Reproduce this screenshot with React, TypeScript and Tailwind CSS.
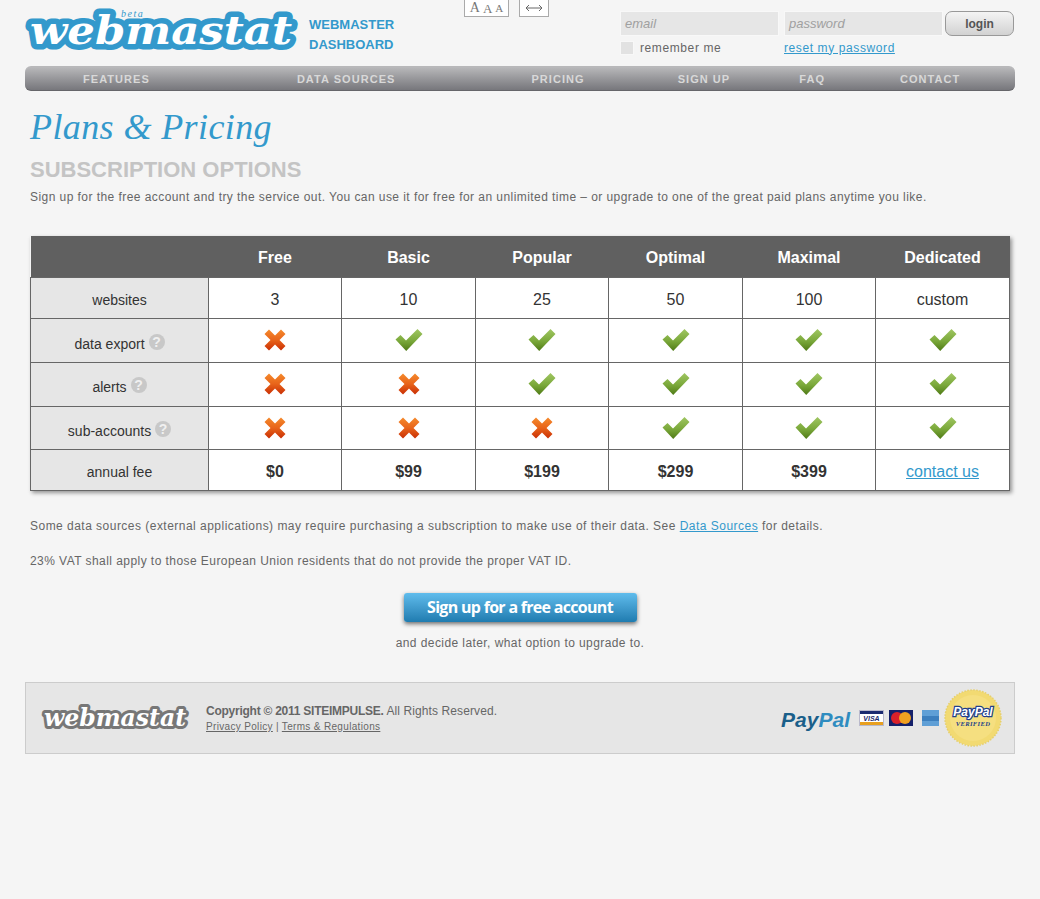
const sans = "font-['Liberation_Sans',Arial,sans-serif]";

function Cross() {
  return (
    <svg width="24" height="24" viewBox="0 0 24 24" className="mx-auto block">
      <defs>
        <linearGradient id="crossFill" x1="0" y1="0" x2="0" y2="1">
          <stop offset="0" stopColor="#f58a2c" />
          <stop offset="0.5" stopColor="#e8641a" />
          <stop offset="1" stopColor="#c92f05" />
        </linearGradient>
      </defs>
      <path
        d="M6 1.5 L12 7.5 L18 1.5 L22.5 6 L16.5 12 L22.5 18 L18 22.5 L12 16.5 L6 22.5 L1.5 18 L7.5 12 L1.5 6 Z"
        fill="url(#crossFill)"
      />
    </svg>
  );
}

function Check() {
  return (
    <svg width="28" height="24" viewBox="0 0 28 24" className="mx-auto block">
      <defs>
        <linearGradient id="checkFill" x1="0" y1="0" x2="0" y2="1">
          <stop offset="0" stopColor="#a0c662" />
          <stop offset="0.55" stopColor="#7aa83a" />
          <stop offset="1" stopColor="#4f7a16" />
        </linearGradient>
      </defs>
      <path d="M0.5 11.5 L5.5 7 L11 12.5 L22.5 1 L27.5 6 L11.2 23 Z" fill="url(#checkFill)" />
    </svg>
  );
}

function Help() {
  return (
    <span className="ml-[4px] inline-flex h-4 w-4 -translate-y-[3px] items-center justify-center rounded-full bg-[#c8c8c8] align-middle text-[14px] leading-none font-bold text-[#f0f0f0]">
      ?
    </span>
  );
}

function Logo() {
  return (
    <svg width="272" height="46" viewBox="0 0 272 46" className="block overflow-visible">
      <text
        x="5"
        y="34"
        fontFamily="'DejaVu Serif', serif"
        fontStyle="italic"
        fontWeight="700"
        fontSize="40"
        textLength="262"
        lengthAdjust="spacingAndGlyphs"
        fill="#ffffff"
        stroke="#3399cc"
        strokeWidth="11"
        strokeLinejoin="round"
        paintOrder="stroke"
      >
        webmastat
      </text>
      <text x="96" y="7" fontFamily="'Liberation Serif', serif" fontStyle="italic" fontSize="10" letterSpacing="1.5" fill="#3399cc">
        beta
      </text>
    </svg>
  );
}

function FooterLogo() {
  return (
    <svg width="150" height="26" viewBox="0 0 150 26" className="block overflow-visible">
      <text
        x="4"
        y="19"
        fontFamily="'DejaVu Serif', serif"
        fontStyle="italic"
        fontWeight="700"
        fontSize="24"
        textLength="142"
        lengthAdjust="spacingAndGlyphs"
        fill="#ffffff"
        stroke="#777777"
        strokeWidth="6"
        strokeLinejoin="round"
        paintOrder="stroke"
      >
        webmastat
      </text>
    </svg>
  );
}

function Cards() {
  return (
    <svg width="80" height="17" viewBox="0 0 80 17" className="block">
      <rect x="0.5" y="0.5" width="24" height="15" fill="#ffffff" stroke="#b9b9cc" />
      <rect x="1" y="1" width="23" height="3" fill="#1a2a70" />
      <rect x="1" y="12" width="23" height="3" fill="#e8a020" />
      <text x="12.5" y="10.5" textAnchor="middle" fontSize="7" fontWeight="700" fontStyle="italic" fontFamily="'Liberation Sans', sans-serif" fill="#1a2a70">
        VISA
      </text>
      <rect x="30" y="0" width="24" height="16" fill="#14206a" />
      <circle cx="38" cy="8" r="6" fill="#d8202a" />
      <circle cx="46" cy="8" r="6" fill="#f0a020" />
      <rect x="63" y="0" width="17" height="16" fill="#5f9fd6" />
      <rect x="63" y="6" width="17" height="5" fill="#3c7fbe" />
    </svg>
  );
}

function Seal() {
  return (
    <svg width="58" height="58" viewBox="0 0 58 58" className="block">
      <circle cx="29" cy="29" r="28" fill="#f2da72" stroke="#e6cf6a" strokeWidth="1.5" strokeDasharray="1.5 1.5" />
      <circle cx="29" cy="29" r="23" fill="#f5df80" />
      <text x="29" y="27" textAnchor="middle" fontFamily="'Liberation Sans', sans-serif" fontStyle="italic" fontWeight="700" fontSize="12" fill="#ffffff" stroke="#22408a" strokeWidth="2.5" paintOrder="stroke">
        PayPal
      </text>
      <text x="29" y="37" textAnchor="middle" fontFamily="'Liberation Serif', serif" fontStyle="italic" fontWeight="700" fontSize="6.5" letterSpacing="0.4" fill="#22408a">
        VERIFIED
      </text>
    </svg>
  );
}

const plans = ["Free", "Basic", "Popular", "Optimal", "Maximal", "Dedicated"];
const cellBorder = "border border-[#666666]";

const rows = [
  { label: "data export", flags: [0, 1, 1, 1, 1, 1], h: "h-[44px]", pad: "pt-[8px]" },
  { label: "alerts", flags: [0, 0, 1, 1, 1, 1], h: "h-[44px]", pad: "pt-[7px]" },
  { label: "sub-accounts", flags: [0, 0, 0, 1, 1, 1], h: "h-[43px]", pad: "pt-[7px]" },
];

export default function App() {
  return (
    <div className={`min-h-[899px] w-[1040px] bg-[#f5f5f5] px-[25px] text-[#666666] ${sans}`}>
      {/* header */}
      <div className="flex h-[66px]">
        <div className="w-[272px] pt-[10px]">
          <Logo />
        </div>
        <div className="ml-[12px] w-[155px] pt-[15px] text-[13px] leading-[20px] font-bold text-[#3399cc]">
          WEBMASTER
          <br />
          DASHBOARD
        </div>
        <div className="flex h-[17px] items-start gap-[10px]">
          <div className="flex h-[17px] w-[45px] items-center justify-center gap-[3px] border border-t-0 border-[#aaaaaa] bg-white font-['Liberation_Serif',serif] text-[#777777]">
            <span className="text-[14px] leading-none">A</span>
            <span className="text-[13px] leading-none">A</span>
            <span className="text-[11px] leading-none">A</span>
          </div>
          <div className="flex h-[17px] w-[30px] items-center justify-center border border-t-0 border-[#aaaaaa] bg-white">
            <svg width="18" height="8" viewBox="0 0 18 8" fill="none" stroke="#666666" strokeWidth="1">
              <path d="M1 4 H17 M4 1 L1 4 L4 7 M14 1 L17 4 L14 7" />
            </svg>
          </div>
        </div>
        <div className="ml-[71px] w-[395px] pt-[11px]">
          <div className="flex items-start">
            <div className="flex h-[25px] w-[159px] items-center border border-[#f8f8f8] bg-[#e6e6e6] px-[4px] text-[13px] text-[#a0a0a0] italic">email</div>
            <div className="ml-[5px] flex h-[25px] w-[159px] items-center border border-[#f8f8f8] bg-[#e6e6e6] px-[4px] text-[13px] text-[#a0a0a0] italic">password</div>
            <div className="ml-[2px] flex h-[25px] w-[69px] items-center justify-center rounded-[7px] border border-[#999999] bg-gradient-to-b from-[#f4f4f4] to-[#d2d2d2] text-[12px] font-bold text-[#555555]">
              login
            </div>
          </div>
          <div className="mt-[4px] flex h-[15px] items-center text-[12px] tracking-[0.6px]">
            <div className="h-[14px] w-[14px] border border-[#f8f8f8] bg-[#e2e2e2]" />
            <span className="ml-[6px] w-[144px]">remember me</span>
            <a className="text-[#3399cc] underline">reset my password</a>
          </div>
        </div>
      </div>

      {/* nav */}
      <div className="flex h-[25px] w-[990px] items-center rounded-[6px] border-t-2 border-b border-t-[#b8b8ba] border-b-[#66666a] bg-gradient-to-b from-[#b6b6b8] to-[#77777c] pt-[1px] pl-[58px] text-[11px] leading-none font-bold tracking-[1.05px] text-[#d8d8d8]">
        <span>FEATURES</span>
        <span className="ml-[147px]">DATA SOURCES</span>
        <span className="ml-[136px]">PRICING</span>
        <span className="ml-[93px]">SIGN UP</span>
        <span className="ml-[69px]">FAQ</span>
        <span className="ml-[75px]">CONTACT</span>
      </div>

      {/* content */}
      <div className="px-[5px]">
        <h1 className="mt-[16px] h-[40px] font-['Liberation_Serif',serif] text-[36px] leading-[40px] tracking-[0.4px] text-[#3399cc] italic">Plans &amp; Pricing</h1>
        <h2 className="mt-[10px] h-[26px] text-[22px] leading-[26px] font-bold text-[#c4c4c4]">SUBSCRIPTION OPTIONS</h2>
        <p className="mt-[5px] h-[18px] text-[12px] leading-[18px] tracking-[0.44px]">
          Sign up for the free account and try the service out. You can use it for free for an unlimited time – or upgrade to one of the great paid plans anytime you like.
        </p>

        <table className="mt-[30px] w-[979px] table-fixed border-collapse text-center text-[#333333] shadow-[2px_2px_4px_rgba(0,0,0,0.4)]">
          <colgroup>
            <col className="w-[178px]" />
            <col className="w-[133px]" />
            <col className="w-[134px]" />
            <col className="w-[133px]" />
            <col className="w-[134px]" />
            <col className="w-[133px]" />
            <col className="w-[134px]" />
          </colgroup>
          <thead>
            <tr className="h-[41px] bg-[#606060] text-[16px] text-white">
              <th />
              {plans.map((plan) => (
                <th key={plan} className="pt-[4px] font-bold">
                  {plan}
                </th>
              ))}
            </tr>
          </thead>
          <tbody>
            <tr className="h-[41px]">
              <td className={`${cellBorder} bg-[#e6e6e6] pt-[5px] text-[14px]`}>websites</td>
              {["3", "10", "25", "50", "100", "custom"].map((v) => (
                <td key={v} className={`${cellBorder} bg-white pt-[4px] text-[16px]`}>
                  {v}
                </td>
              ))}
            </tr>
            {rows.map((row) => (
              <tr key={row.label} className={row.h}>
                <td className={`${cellBorder} bg-[#e6e6e6] text-[14px] ${row.pad}`}>
                  {row.label}
                  <Help />
                </td>
                {row.flags.map((flag, i) => (
                  <td key={i} className={`${cellBorder} bg-white`}>
                    {flag ? <Check /> : <Cross />}
                  </td>
                ))}
              </tr>
            ))}
            <tr className="h-[41px]">
              <td className={`${cellBorder} bg-[#e6e6e6] pt-[5px] text-[14px]`}>annual fee</td>
              {["$0", "$99", "$199", "$299", "$399"].map((v) => (
                <td key={v} className={`${cellBorder} bg-white pt-[4px] text-[16px] font-bold`}>
                  {v}
                </td>
              ))}
              <td className={`${cellBorder} bg-white pt-[5px] text-[16px] text-[#3399cc] underline`}>contact us</td>
            </tr>
          </tbody>
        </table>

        <p className="mt-[26px] h-[18px] text-[12px] leading-[18px] tracking-[0.475px]">
          Some data sources (external applications) may require purchasing a subscription to make use of their data. See <a className="text-[#3399cc] underline">Data Sources</a> for details.
        </p>
        <p className="mt-[17px] h-[18px] text-[12px] leading-[18px] tracking-[0.44px]">
          23% VAT shall apply to those European Union residents that do not provide the proper VAT ID.
        </p>

        <div className="mt-[23px] flex justify-center">
          <div className="flex h-[29px] w-[233px] items-center justify-center rounded-[3px] bg-gradient-to-b from-[#5fbcec] to-[#1f7cb0] font-['Open_Sans',sans-serif] text-[16px] font-bold tracking-[-0.7px] text-white shadow-[0_2px_4px_rgba(0,0,0,0.55)]">
            Sign up for a free account
          </div>
        </div>
        <p className="mt-[12px] text-center text-[12px] leading-[18px] tracking-[0.42px]">and decide later, what option to upgrade to.</p>
      </div>

      {/* footer */}
      <div className="mt-[30px] flex h-[72px] w-[990px] items-center border border-[#cccccc] bg-[#e6e6e6]">
        <div className="ml-[14px] pt-[5px]">
          <FooterLogo />
        </div>
        <div className="ml-[16px] pt-[3px]">
          <div className="text-[12px] leading-[15px] tracking-[0.1px]">
            <b className="tracking-[-0.25px]">Copyright © 2011 SITEIMPULSE.</b> All Rights Reserved.
          </div>
          <div className="text-[10px] leading-[15px] tracking-[0.33px]">
            <a className="underline">Privacy Policy</a> | <a className="underline">Terms &amp; Regulations</a>
          </div>
        </div>
        <div className="ml-auto flex items-center pr-[12px] pt-[1px]">
          <div className="mr-[1px] pt-[2px] text-[21px] leading-none font-bold italic">
            <span className="text-[#1a5f8a]">Pay</span>
            <span className="text-[#2f8cc0]">Pal</span>
          </div>
          <div className="ml-[8px]">
            <Cards />
          </div>
          <div className="ml-[5px]">
            <Seal />
          </div>
        </div>
      </div>
    </div>
  );
}
